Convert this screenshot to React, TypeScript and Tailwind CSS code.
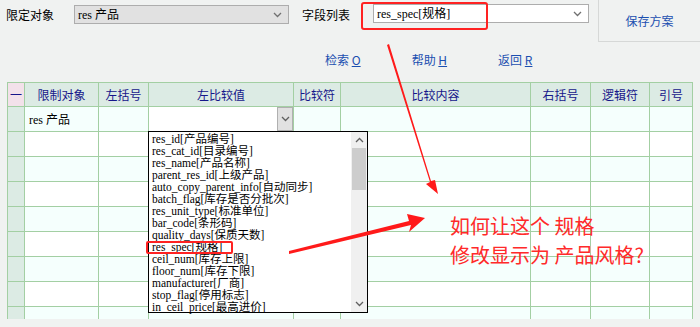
import React from 'react';

const UI = { fontFamily: '"Noto Sans CJK SC", "Noto Sans", sans-serif' };
const SERIF = { fontFamily: '"Liberation Serif", "Noto Sans CJK SC", serif' };

const cols = [
  { w: 17, t: '一' },
  { w: 74, t: '限制对象' },
  { w: 50, t: '左括号' },
  { w: 145, t: '左比较值' },
  { w: 47, t: '比较符' },
  { w: 190, t: '比较内容' },
  { w: 60, t: '右括号' },
  { w: 59, t: '逻辑符' },
  { w: 43, t: '引号' },
];

const items = [
  'res_id[产品编号]',
  'res_cat_id[目录编号]',
  'res_name[产品名称]',
  'parent_res_id[上级产品]',
  'auto_copy_parent_info[自动同步]',
  'batch_flag[库存是否分批次]',
  'res_unit_type[标准单位]',
  'bar_code[条形码]',
  'quality_days[保质天数]',
  'res_spec[规格]',
  'ceil_num[库存上限]',
  'floor_num[库存下限]',
  'manufacturer[厂商]',
  'stop_flag[停用标志]',
  'in_ceil_price[最高进价]',
];

function Chevron({ up = false, color = '#707070' }: { up?: boolean; color?: string }) {
  return (
    <svg width="9" height="6" viewBox="0 0 9 6">
      <polyline
        points={up ? '1,5 4.5,1.5 8,5' : '1,1 4.5,4.5 8,1'}
        fill="none"
        stroke={color}
        strokeWidth="1.3"
      />
    </svg>
  );
}

function Select({ value, gray, w }: { value: string; gray?: boolean; w: number }) {
  return (
    <div
      className={`flex h-[19px] items-center justify-between border border-[#adadad] pl-[3px] pr-[6px] ${gray ? 'bg-[#e1e1e1]' : 'bg-white'}`}
      style={{ width: w }}
    >
      <span className="text-[12px] leading-none text-black" style={SERIF}>
        {value}
      </span>
      <Chevron />
    </div>
  );
}

function LinkBtn({ label, k }: { label: string; k: string }) {
  return (
    <span className="text-[12px] text-[#1b4fb0]" style={UI}>
      {label} <span className="underline">{k}</span>
    </span>
  );
}

export default function App() {
  const rows = Array.from({ length: 9 });
  return (
    <div className="relative h-[327px] w-[700px] overflow-hidden bg-[#f0f2f1]" style={UI}>
      {/* top filter area */}
      <div className="flex h-[82px]">
        <div className="flex-1">
          <div className="flex h-[29px] items-center pl-[6px] text-[12px] text-black">
            <span className="w-[68px]">限定对象</span>
            <Select value="res 产品" gray w={215} />
            <span className="ml-[13px] w-[71px]">字段列表</span>
            <div className="-mt-[2px]">
              <Select value="res_spec[规格]" w={216} />
            </div>
          </div>
          <div className="flex h-[53px] items-center gap-[51px] pl-[325px] pt-[9px]">
            <LinkBtn label="检索" k="O" />
            <LinkBtn label="帮助" k="H" />
            <LinkBtn label="返回" k="R" />
          </div>
        </div>
        <div className="flex h-[42px] w-[102px] items-center justify-center border-b border-l border-[#d6d8d7] text-[12px] text-[#1b4fb0]">
          保存方案
        </div>
      </div>

      {/* grid */}
      <div className="ml-[7px] h-[237px] w-[686px] overflow-hidden">
        <table className="table-fixed border-collapse text-[12px]">
          <colgroup>
            {cols.map((c, i) => (
              <col key={i} style={{ width: c.w }} />
            ))}
          </colgroup>
          <thead>
            <tr className="h-[24px]">
              {cols.map((c, i) => (
                <th
                  key={i}
                  className={`border border-[#a3cfa3] p-0 text-center font-normal text-[#16168a] ${i === 0 ? 'bg-[#f3e1ea]' : 'bg-[#dcebe4]'}`}
                >
                  {c.t}
                </th>
              ))}
            </tr>
          </thead>
          <tbody>
            {rows.map((_, r) => (
              <tr key={r} className={`h-[25px] ${r % 2 === 0 ? 'bg-[#f5fffd]' : 'bg-white'}`}>
                {cols.map((c, i) => (
                  <td
                    key={i}
                    className={`border border-[#a3cfa3] p-0 ${i === 0 ? 'bg-[#dcebe4]' : ''}`}
                  >
                    {r === 0 && i === 1 && (
                      <span className="pl-[4px] text-black" style={SERIF}>
                        res 产品
                      </span>
                    )}
                    {r === 0 && i === 3 && (
                      <div className="flex h-[24px] justify-end bg-white">
                        <div className="flex w-[16px] items-center justify-center border border-[#b0b0b0] bg-[#e1e1e1]">
                          <Chevron color="#606060" />
                        </div>
                      </div>
                    )}
                  </td>
                ))}
              </tr>
            ))}
          </tbody>
        </table>
      </div>

      {/* open dropdown list */}
      <div className="absolute left-[148px] top-[131px] flex h-[182px] w-[220px] border border-black bg-white">
        <div className="flex-1 pl-[3px] pt-[1px]">
          {items.map((t) => (
            <div key={t} className="h-[12px] whitespace-nowrap text-[11.5px] leading-[12px] text-black" style={SERIF}>
              {t}
            </div>
          ))}
        </div>
        <div className="flex w-[16px] flex-col bg-[#f0f0f0]">
          <div className="flex h-[16px] items-center justify-center">
            <Chevron up color="#606060" />
          </div>
          <div className="mx-[1px] h-[42px] bg-[#cdcdcd]" />
          <div className="flex-1" />
          <div className="flex h-[16px] items-center justify-center">
            <Chevron color="#606060" />
          </div>
        </div>
      </div>

      {/* annotations */}
      <div className="pointer-events-none absolute left-[361px] top-[2px] h-[28px] w-[127px] rounded-[3px] border-2 border-[#ff2222]" />
      <div className="pointer-events-none absolute left-[146px] top-[241px] h-[13px] w-[87px] rounded-[2px] border-2 border-[#ff2222]" />
      <svg className="pointer-events-none absolute left-0 top-0" width="700" height="327">
        <polygon points="387,45 389,44 431,181 435,180 438,194 426,184 430,182" fill="#ff1a1a" />
        <polygon points="289,251 289,254 411,225 409,232 425,218 407,214 409,221" fill="#ff1a1a" />
      </svg>
      <div className="pointer-events-none absolute left-[450px] top-[211px] text-[20px] leading-[29px] text-[#ff2a2a]">
        <div>如何让这个 规格</div>
        <div>修改显示为 产品风格?</div>
      </div>
    </div>
  );
}
